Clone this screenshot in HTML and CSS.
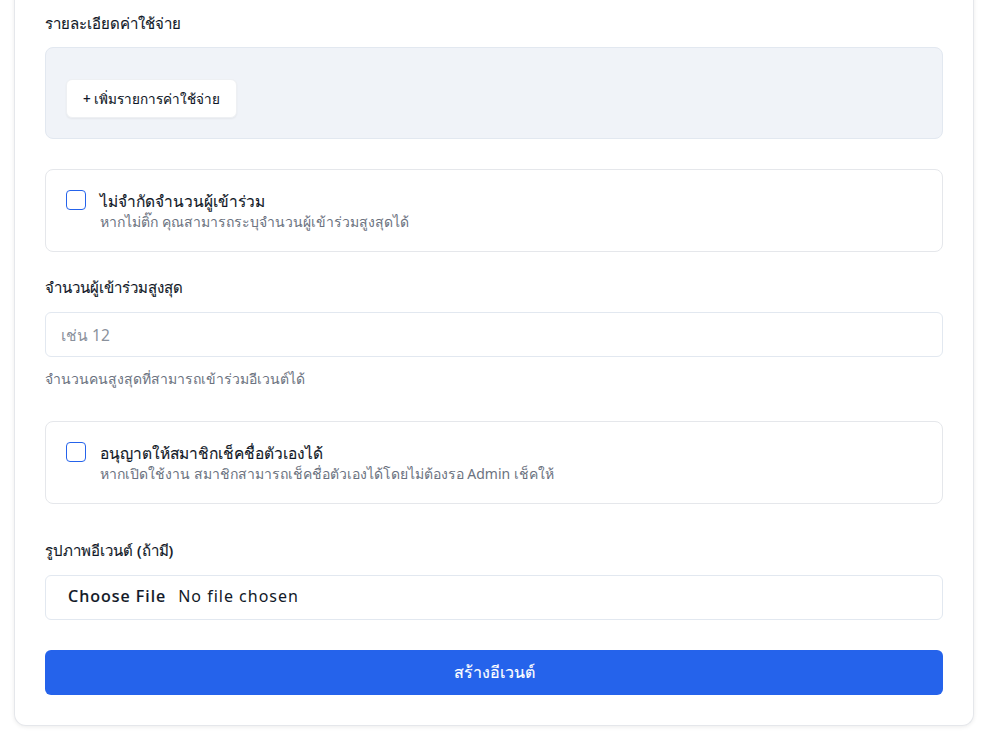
FILE: index.html
```html
<!DOCTYPE html>
<html lang="th">
<head>
<meta charset="utf-8">
<link rel="stylesheet" href="styles.css">
</head>
<body>
<div class="page">
  <form class="card">
    <div class="field">
      <label class="label">รายละเอียดค่าใช้จ่าย</label>
      <div class="expense-box">
        <button type="button" class="add-btn">+ เพิ่มรายการค่าใช้จ่าย</button>
      </div>
    </div>

    <label class="check-card">
      <input type="checkbox" class="check">
      <span class="check-text">
        <span class="check-title">ไม่จำกัดจำนวนผู้เข้าร่วม</span>
        <span class="check-desc">หากไม่ติ๊ก คุณสามารถระบุจำนวนผู้เข้าร่วมสูงสุดได้</span>
      </span>
    </label>

    <div class="field field-max">
      <label class="label">จำนวนผู้เข้าร่วมสูงสุด</label>
      <input type="number" class="input" placeholder="เช่น 12">
      <p class="help">จำนวนคนสูงสุดที่สามารถเข้าร่วมอีเวนต์ได้</p>
    </div>

    <label class="check-card">
      <input type="checkbox" class="check">
      <span class="check-text">
        <span class="check-title">อนุญาตให้สมาชิกเช็คชื่อตัวเองได้</span>
        <span class="check-desc">หากเปิดใช้งาน สมาชิกสามารถเช็คชื่อตัวเองได้โดยไม่ต้องรอ Admin เช็คให้</span>
      </span>
    </label>

    <div class="field field-image">
      <label class="label">รูปภาพอีเวนต์ (ถ้ามี)</label>
      <div class="file-input">
        <span class="file-btn">Choose File</span>
        <span class="file-name">No file chosen</span>
      </div>
    </div>

    <button type="button" class="submit">สร้างอีเวนต์</button>
  </form>
</div>
</body>
</html>
```

FILE: styles.css
```css
* { box-sizing: border-box; }
html, body { margin: 0; padding: 0; background: #ffffff; }
body {
  font-family: "Noto Sans", "Liberation Sans", sans-serif;
  color: #111827;
  overflow: hidden;
  height: 731px;
}
.page {
  padding: 0 10px 0 14px;
  margin-top: -40px;
}
.card {
  width: 960px;
  background: #fff;
  border: 1px solid #e5e7eb;
  border-top: none;
  border-radius: 0 0 12px 12px;
  box-shadow: 0 1px 4px rgba(0,0,0,0.08);
  padding: 52px 30px 30px 30px;
  display: flex;
  flex-direction: column;
}
.field { display: flex; flex-direction: column; }
.label {
  font-size: 15px;
  font-weight: 500;
  line-height: 22px;
  color: #111827;
  margin-bottom: 13px;
  -webkit-text-stroke: 0.12px #111827;
}
.expense-box {
  background: #f0f3f8;
  border: 1px solid #e2e8f0;
  border-radius: 8px;
  padding: 31px 20px 20px 20px;
  height: 92px;
  margin-bottom: 30px;
}
.add-btn {
  font-family: inherit;
  font-size: 13.5px;
  font-weight: 500;
  color: #111827;
  background: #fff;
  border: 1px solid #eef0f3;
  border-radius: 6px;
  height: 39px;
  padding: 0 16px;
  box-shadow: 0 1px 2px rgba(0,0,0,0.05);
  -webkit-text-stroke: 0.1px #111827;
}
.check-card {
  display: flex;
  align-items: flex-start;
  gap: 14px;
  border: 1px solid #e5e7eb;
  border-radius: 8px;
  padding: 20px 20px 17px 20px;
  height: 83px;
}
.check {
  appearance: none;
  width: 20px;
  height: 20px;
  margin: 0;
  border: 1.5px solid #2563eb;
  border-radius: 4px;
  background: #fff;
  flex: none;
}
.check-text { display: flex; flex-direction: column; }
.check-title {
  font-size: 15.5px;
  font-weight: 500;
  line-height: 22px;
  color: #111827;
  -webkit-text-stroke: 0.12px #111827;
}
.check-desc {
  font-size: 14px;
  line-height: 20px;
  color: #6b7280;
}
.field-max { margin-top: 24px; }
.field-max .label { margin-bottom: 14px; }
.field-image { margin-top: 35px; }
.field-image .label { margin-bottom: 14px; }
.input {
  font-family: inherit;
  font-size: 15.5px;
  height: 45px;
  padding: 0 15px;
  border: 1px solid #e2e8f0;
  border-radius: 6px;
  color: #111827;
  outline: none;
}
.input::placeholder { color: #8a919c; }
.help {
  margin: 12px 0 32px 0;
  font-size: 14px;
  line-height: 20px;
  color: #6b7280;
}
.file-input {
  display: flex;
  align-items: center;
  height: 45px;
  border: 1px solid #e2e8f0;
  border-radius: 6px;
  padding: 0 22px 4px 22px;
  font-size: 16px;
  letter-spacing: 1px;
  color: #111827;
  gap: 12px;
}
.file-btn { font-weight: 500; -webkit-text-stroke: 0.15px #111827; }
.submit {
  margin-top: 30px;
  height: 45px;
  border: none;
  border-radius: 6px;
  background: #2563eb;
  color: #fff;
  font-family: inherit;
  font-size: 16px;
  font-weight: 500;
  -webkit-text-stroke: 0.15px #fff;
}
```
